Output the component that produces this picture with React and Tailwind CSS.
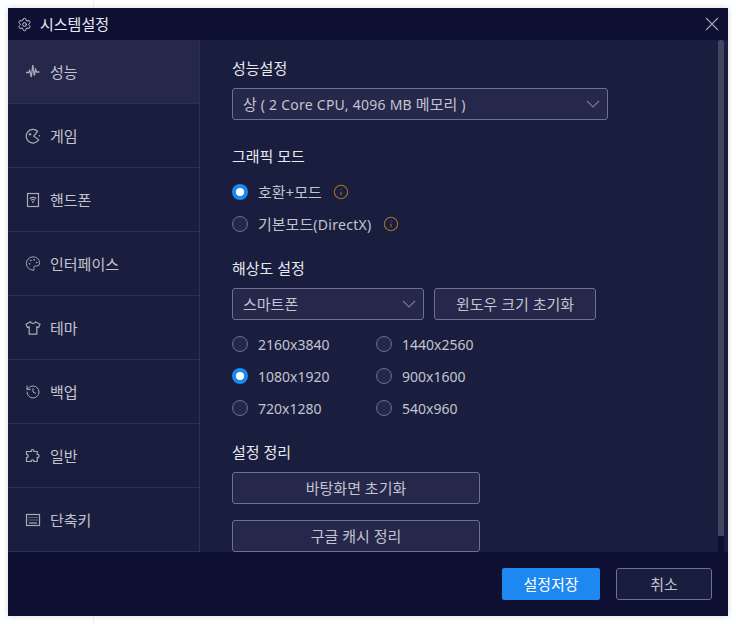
import { Settings, Palette, History, Info } from 'lucide-react';

const WaveIcon = () => (
  <svg width="16" height="16" viewBox="0 0 16 16" fill="none" stroke="currentColor" strokeWidth="1.3">
    <path d="M1 8.500h2.500l1.200-2 1.600 6.500 1.500-12 1.500 10.500 1.400-6 1 2.500h2.800" />
  </svg>
);

const GameIcon = () => (
  <svg width="16" height="16" viewBox="0 0 16 16" fill="none" stroke="currentColor" strokeWidth="1.2">
    <path d="M12.600 3.200A6.800 6.800 0 1 0 13.800 11.800L8.800 8.200z" />
    <path d="M5 5v2.600M3.700 6.300h2.600" />
    <circle cx="14.400" cy="7.800" r="0.800" fill="currentColor" stroke="none" />
  </svg>
);

const PhoneIcon = () => (
  <svg width="16" height="16" viewBox="0 0 16 16" fill="none" stroke="currentColor" strokeWidth="1.200">
    <rect x="2.500" y="1.500" width="11" height="13" />
    <path d="M4.800 6.600c2-1.500 4.400-1.500 6.400 0M6 8.200c1.300-.9 2.700-.9 4 0" />
    <circle cx="8" cy="10" r="0.900" fill="currentColor" stroke="none" />
  </svg>
);

const ShirtIcon = () => (
  <svg width="16" height="16" viewBox="0 0 16 16" fill="none" stroke="currentColor" strokeWidth="1.200">
    <path d="M5.500 1.800 1 4.200l1.400 3.400 1.800-.7v7.300h7.600V6.900l1.800.7L15 4.200l-4.500-2.400c-.5 2.200-4.500 2.200-5 0z" />
  </svg>
);

const PuzzleIcon = () => (
  <svg width="16" height="16" viewBox="0 0 16 16" fill="none" stroke="currentColor" strokeWidth="1.200">
    <path d="M6.200 3.500c-1-2.500 3.600-2.500 2.600 0h3.400v3c2.500-.8 2.500 3.800 0 3v4H8.800c.8-2.300-3.400-2.300-2.600 0H1.500v-4c2.300.8 2.300-3.500 0-3v-3z" />
  </svg>
);

const KeyboardIcon = () => (
  <svg width="16" height="16" viewBox="0 0 16 16" fill="none" stroke="currentColor" strokeWidth="1.200">
    <rect x="1.500" y="2.500" width="13" height="11" />
    <path d="M3.500 5.500h9M3.500 8h9" strokeDasharray="1 1" />
    <path d="M4 11h8" />
  </svg>
);

const Chevron = () => (
  <svg width="14" height="8" viewBox="0 0 14 8" fill="none" stroke="#77798f" strokeWidth="1.100">
    <path d="M1 1l6 6 6-6" />
  </svg>
);

const CloseIcon = () => (
  <svg width="14" height="14" viewBox="0 0 14 14" fill="none" stroke="#a6a7b6" strokeWidth="1.100">
    <path d="M1 1l12 12M13 1L1 13" />
  </svg>
);

const MENU = [
  { label: '성능', icon: <WaveIcon /> },
  { label: '게임', icon: <GameIcon /> },
  { label: '핸드폰', icon: <PhoneIcon /> },
  { label: '인터페이스', icon: <Palette size={17} strokeWidth={1.4} /> },
  { label: '테마', icon: <ShirtIcon /> },
  { label: '백업', icon: <History size={16} strokeWidth={1.5} /> },
  { label: '일반', icon: <PuzzleIcon /> },
  { label: '단축키', icon: <KeyboardIcon /> },
];

const RESOLUTIONS = [
  ['2160x3840', '1440x2560'],
  ['1080x1920', '900x1600'],
  ['720x1280', '540x960'],
];

function Radio({ children, checked, info }) {
  return (
    <div className="flex items-center h-8 text-[15px] text-[#c3c4cf]">
      {checked ? (
        <span className="w-4 h-4 rounded-full bg-[#1e87f0] flex items-center justify-center shrink-0">
          <span className="w-[8px] h-[8px] rounded-full bg-white" />
        </span>
      ) : (
        <span className="w-4 h-4 rounded-full border border-[#6f7186] bg-[#25284a] shrink-0" />
      )}
      <span className="ml-[10px]">{children}</span>
      {info && <Info size={16} strokeWidth={1.6} className="ml-[11px] text-[#a8702e]" />}
    </div>
  );
}

function SelectBox({ children, width }) {
  return (
    <div className={`${width} h-8 flex items-center justify-between pl-[10px] pr-[7px] rounded-[3px] border border-[#6f7186] bg-[#25284a] text-[15px] text-[#c3c4cf]`}>
      <span>{children}</span>
      <Chevron />
    </div>
  );
}

function OutlineBtn({ label, width }) {
  return (
    <div className={`${width} h-8 flex items-center justify-center rounded-[3px] border border-[#6f7186] bg-[#25284a] text-[15px] text-[#c3c4cf]`}>
      {label}
    </div>
  );
}

function Heading({ children, className }) {
  return <div className={`h-5 leading-5 text-[15px] text-[#e8e8ee] ${className}`}>{children}</div>;
}

export default function App() {
  return (
    <div className="relative w-[736px] h-[624px] bg-white p-2 font-['Noto_Sans','Noto_Sans_CJK_KR',sans-serif]">
      <div className="absolute left-[93px] top-0 w-px h-full bg-[#f0f0f0]" />
      <div className="relative w-[720px] h-[608px] flex flex-col bg-[#1a1e3e] shadow-[0_0_6px_rgba(0,0,0,0.15)]">
        {/* title bar */}
        <div className="h-8 shrink-0 flex items-center justify-between pl-[9px] pr-[9px] bg-[#0d1033]">
          <div className="flex items-center gap-[9px] text-[15px] text-[#e8e8ee]">
            <Settings size={15} strokeWidth={1.6} className="text-[#c9cad4]" />
            <span className="-ml-px">시스템설정</span>
          </div>
          <CloseIcon />
        </div>

        <div className="flex h-[512px] shrink-0">
          {/* sidebar */}
          <div className="w-[192px] shrink-0 border-r border-[#2d3050]">
            {MENU.map((item, i) => (
              <div
                key={item.label}
                className={`h-16 flex items-center pl-[17px] gap-[9px] border-b border-[#2d3050] text-[15px] text-[#c3c4cf] ${i === 0 ? 'bg-[#25284a]' : ''}`}
              >
                <span className="w-4 flex justify-center text-[#a9aab8]">{item.icon}</span>
                <span className="pt-px">{item.label}</span>
              </div>
            ))}
          </div>

          {/* content */}
          <div className="flex-1 overflow-hidden pl-8 pt-[18px]">
            <Heading>성능설정</Heading>
            <SelectBox width="w-[376px] mt-[10px]">
              상 <span className="text-[14px] tracking-[0.25px]">( 2 Core CPU, 4096 MB</span> 메모리 <span className="text-[14px]">)</span>
            </SelectBox>

            <Heading className="mt-[26px]">그래픽 모드</Heading>
            <div className="mt-[10px]">
              <Radio checked info>호환+모드</Radio>
              <Radio info>기본모드<span className="text-[14px] tracking-[0.3px]">(DirectX)</span></Radio>
            </div>

            <Heading className="mt-[18px]">해상도 설정</Heading>
            <div className="flex gap-[10px] mt-[10px]">
              <SelectBox width="w-[192px]">스마트폰</SelectBox>
              <OutlineBtn label="윈도우 크기 초기화" width="w-[162px]" />
            </div>
            <div className="mt-2">
              {RESOLUTIONS.map(row => (
                <div key={row[0]} className="grid grid-cols-[144px_144px]">
                  <Radio checked={row[0] === '1080x1920'}><span className="text-[14px]">{row[0]}</span></Radio>
                  <Radio><span className="text-[14px]">{row[1]}</span></Radio>
                </div>
              ))}
            </div>

            <Heading className="mt-[18px]">설정 정리</Heading>
            <OutlineBtn label="바탕화면 초기화" width="w-[248px] mt-[10px]" />
            <OutlineBtn label="구글 캐시 정리" width="w-[248px] mt-4" />
          </div>

          {/* scrollbar */}
          <div className="w-[6px] mr-1 shrink-0 bg-[#0d1033]">
            <div className="h-[496px] bg-[#43465f] rounded-t-[2px]" />
          </div>
        </div>

        {/* footer */}
        <div className="flex-1 flex items-center justify-end pr-4 gap-4 bg-[#0d1033]">
          <div className="w-[98px] h-8 flex items-center justify-center rounded-[2px] bg-[#1e87f0] text-[15px] text-white">설정저장</div>
          <div className="w-[96px] h-8 flex items-center justify-center rounded-[3px] border border-[#6f7186] bg-[#1a1e3e] text-[15px] text-[#c3c4cf]">취소</div>
        </div>
      </div>
    </div>
  );
}
